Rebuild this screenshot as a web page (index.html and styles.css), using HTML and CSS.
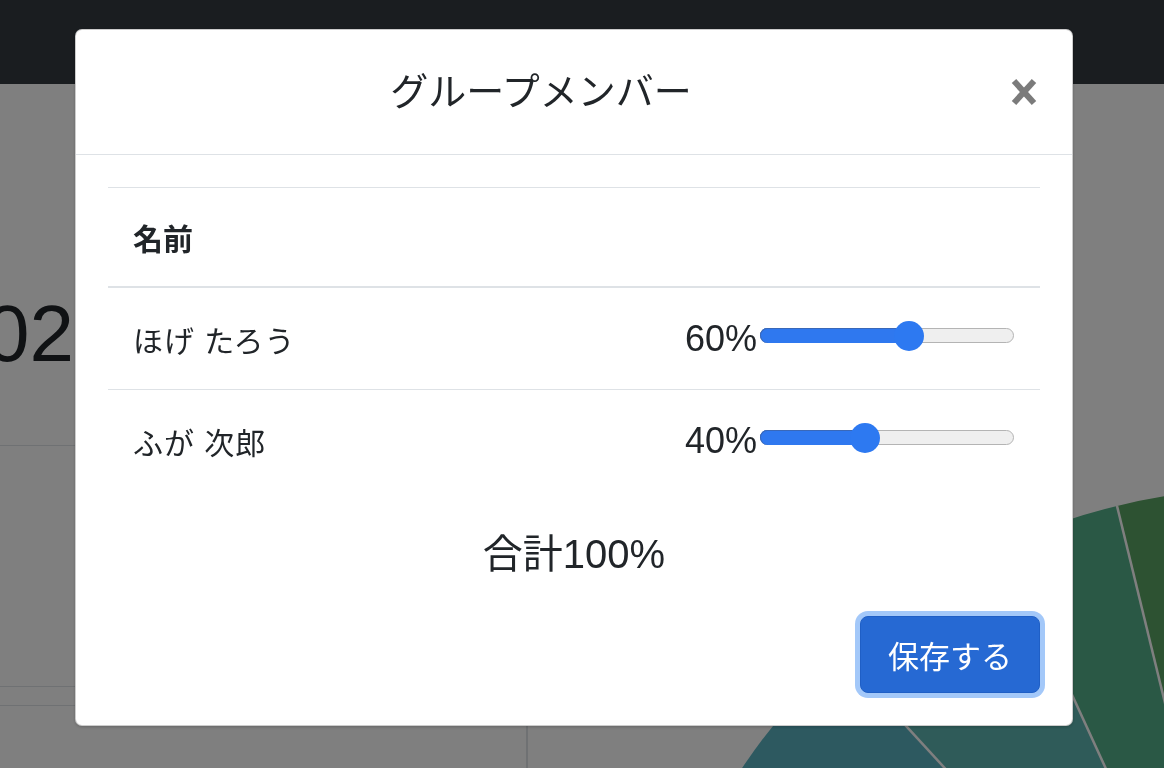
FILE: index.html
```html
<!DOCTYPE html>
<html lang="ja">
<head>
<meta charset="utf-8">
<title>グループメンバー</title>
<link rel="stylesheet" href="styles.css">
</head>
<body>
<div class="page">
  <header class="navbar"></header>
  <main class="dash">
    <section class="left">
      <div class="stat"><div class="stat-value"><span>202</span></div></div>
      <div class="stat-chart"></div>
      <div class="line-row"></div>
      <div class="line-row last"></div>
    </section>
    <section class="right">
      <svg class="pie" viewBox="528 84 636 684" preserveAspectRatio="none">
        <path d="M1266 1118 L1455 517 A630 630 0 0 0 1117 505.9 Z" fill="#5aa464"/>
        <path d="M1266 1118 L1117 505.9 A630 630 0 0 0 1003.5 545.3 Z" fill="#54b08a"/>
        <path d="M1266 1118 L1003.5 545.3 A630 630 0 0 0 839.9 653.9 Z" fill="#5eb6b2"/>
        <path d="M1266 1118 L839.9 653.9 A630 630 0 0 0 667.5 921 Z" fill="#5ab2c0"/>
        <g stroke="#fff" stroke-width="2.5">
          <line x1="1266" y1="1118" x2="1117" y2="505.9"/>
          <line x1="1266" y1="1118" x2="1003.5" y2="545.3"/>
          <line x1="1266" y1="1118" x2="839.9" y2="653.9"/>
        </g>
      </svg>
    </section>
  </main>
</div>
<div class="backdrop"></div>
<div class="modal-wrap">
  <div class="modal">
    <div class="modal-header">
      <h4 class="modal-title">グループメンバー</h4>
      <button class="close" type="button" aria-label="Close">
        <svg width="26" height="28" viewBox="0 0 26 28"><g stroke="#7b7b7b" stroke-width="6"><line x1="3" y1="3" x2="23" y2="25"/><line x1="23" y1="3" x2="3" y2="25"/></g></svg>
      </button>
    </div>
    <div class="modal-body">
      <div class="members">
        <div class="members-head">名前</div>
        <div class="member-row">
          <span class="member-name">ほげ たろう</span>
          <div class="share">
            <span class="share-label">60%</span>
            <div class="slider">
              <div class="slider-fill" style="width:149px"></div>
              <div class="slider-thumb" style="left:148.4px"></div>
            </div>
          </div>
        </div>
        <div class="member-row">
          <span class="member-name">ふが 次郎</span>
          <div class="share">
            <span class="share-label">40%</span>
            <div class="slider">
              <div class="slider-fill" style="width:104px"></div>
              <div class="slider-thumb" style="left:103.6px"></div>
            </div>
          </div>
        </div>
      </div>
      <p class="total">合計100%</p>
      <div class="actions"><button class="btn-save" type="button">保存する</button></div>
    </div>
  </div>
</div>
</body>
</html>
```
FILE: styles.css
```css
html, body {
  margin: 0;
  height: 100%;
}
body {
  font-family: "Liberation Sans", "Noto Sans CJK JP", sans-serif;
  color: #212529;
  background: #fff;
  overflow: hidden;
}
.navbar {
  height: 84px;
  background: #343a40;
}
.dash {
  display: grid;
  grid-template-columns: 528px 1fr;
  height: 684px;
}
.left {
  border-right: 2px solid #dee2e6;
  display: flex;
  flex-direction: column;
}
.stat {
  height: 361px;
  border-bottom: 1px solid #dee2e6;
}
.stat-value {
  width: 74px;
  margin-top: 210px;
  display: flex;
  justify-content: flex-end;
  font-size: 80px;
  line-height: 80px;
  white-space: nowrap;
}
.stat-chart {
  height: 240px;
}
.line-row {
  height: 18px;
  border-top: 1px solid #dee2e6;
}
.line-row.last {
  flex: 1;
}
.right {
  overflow: hidden;
}
.pie {
  display: block;
  width: 100%;
  height: 100%;
}
.backdrop {
  position: fixed;
  inset: 0;
  background: rgba(0, 0, 0, 0.5);
}
.modal-wrap {
  position: fixed;
  inset: 0;
  padding: 29px 0 0 75px;
  box-sizing: border-box;
}
.modal {
  width: 998px;
  box-sizing: border-box;
  background: #fff;
  border: 1px solid rgba(0, 0, 0, 0.2);
  border-radius: 7px;
  box-shadow: 0 1px 3px rgba(0, 0, 0, 0.2);
}
.modal-header {
  display: flex;
  align-items: center;
  height: 124px;
  padding: 0 22px 0 32px;
  border-bottom: 1px solid #dee2e6;
}
.modal-title {
  flex: 1;
  margin: 0 24px 0 0;
  text-align: center;
  font-size: 38px;
  font-weight: 400;
  line-height: 1.5;
}
.close {
  width: 52px;
  height: 52px;
  padding: 0;
  border: 0;
  background: none;
  display: flex;
  align-items: center;
  justify-content: center;
}
.modal-body {
  padding: 32px;
}
.members-head {
  height: 98px;
  border-top: 1px solid #dee2e6;
  border-bottom: 2px solid #dee2e6;
  display: flex;
  align-items: center;
  padding: 0 24px 0 25px;
  font-size: 30px;
  font-weight: 700;
}
.member-row {
  height: 101px;
  display: flex;
  align-items: center;
  justify-content: space-between;
  padding: 0 26px 0 25px;
  font-size: 30px;
}
.member-name {
  letter-spacing: 1px;
}
.member-row + .member-row {
  border-top: 1px solid #dee2e6;
}
.share {
  display: flex;
  align-items: center;
  gap: 3px;
}
.share-label {
  font-size: 36px;
}
.slider {
  position: relative;
  width: 254px;
  height: 15px;
  box-sizing: border-box;
  margin-top: -6px;
  border: 1px solid #b4b4b4;
  border-radius: 8px;
  background: #efefef;
}
.slider-fill {
  position: absolute;
  left: -1px;
  top: -1px;
  bottom: -1px;
  border-radius: 8px 0 0 8px;
  background: #2f78ef;
  box-shadow: inset 0 1px 0 #3a68b8, inset 1px 0 0 #3a68b8;
}
.slider-thumb {
  position: absolute;
  top: 50%;
  width: 30px;
  height: 30px;
  margin: -15px 0 0 -15px;
  border-radius: 50%;
  background: #2d79f1;
}
.total {
  margin: 33px 0 0;
  text-align: center;
  font-size: 40px;
  line-height: 60px;
}
.actions {
  display: flex;
  justify-content: flex-end;
  margin-top: 32px;
}
.btn-save {
  width: 180px;
  height: 77px;
  box-sizing: border-box;
  border: 1px solid #1f5fc6;
  border-radius: 8px;
  background: #2669d3;
  color: #fff;
  font-family: inherit;
  font-size: 31px;
  box-shadow: 0 0 0 5px #a3c8f9;
}
```
